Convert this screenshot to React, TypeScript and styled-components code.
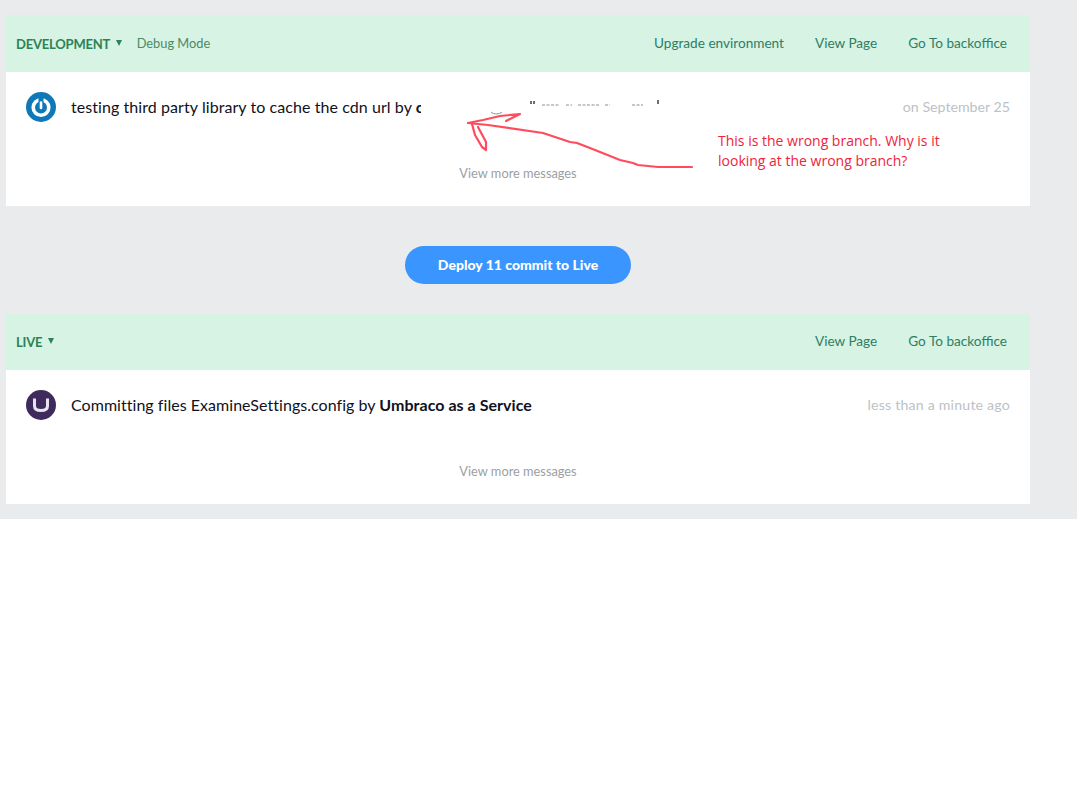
import React from "react";
import styled, { createGlobalStyle } from "styled-components";

const GlobalStyle = createGlobalStyle`
  html, body {
    margin: 0;
    padding: 0;
    background: #ffffff;
    font-family: "Lato", "Open Sans", sans-serif;
  }
`;

const Page = styled.div`
  position: relative;
  width: 1077px;
  height: 519px;
  box-sizing: border-box;
  padding: 15px 47px 15px 6px;
  background: #e9ebed;
`;

const Panel = styled.section`
  background: #ffffff;
`;

const PanelHeader = styled.header<{ $tall?: boolean }>`
  display: flex;
  align-items: center;
  box-sizing: border-box;
  height: ${(p) => (p.$tall ? "57px" : "56px")};
  padding: 0 23px 2px 10px;
  background: #d6f3e3;
  color: #2f7d63;
  font-size: 13.6px;
`;

const EnvName = styled.strong`
  margin-top: 2px;
  color: #2a8356;
  font-size: 13px;
  font-weight: 700;
  letter-spacing: -0.2px;
`;

const Caret = styled.span`
  width: 0;
  height: 0;
  margin-left: 5.5px;
  border-left: 3px solid transparent;
  border-right: 3px solid transparent;
  border-top: 6px solid #2a8356;
`;

const DebugLink = styled.a`
  margin-left: 15px;
  color: #4b8a66;
  font-size: 12.8px;
`;

const Links = styled.nav`
  display: flex;
  gap: 31px;
  margin-left: auto;
`;

const Message = styled.div`
  display: flex;
  align-items: center;
  gap: 15px;
  padding: 20px 20px 0;
  height: 30px;
  color: #111122;
  font-size: 16px;
`;

const Avatar = styled.svg`
  width: 30px;
  height: 30px;
  flex: none;
`;

const MessageText = styled.span<{ $spacing: number }>`
  margin-bottom: 2px;
  letter-spacing: ${(p) => p.$spacing}px;
`;

const Time = styled.span<{ $spacing?: number }>`
  margin: 0 0 2px auto;
  color: #bcc2c6;
  font-size: 14.2px;
  letter-spacing: ${(p) => p.$spacing ?? 0}px;
`;

const More = styled.a`
  display: block;
  margin-top: 40px;
  padding-bottom: 21px;
  color: #9a9fa3;
  font-size: 12.8px;
  line-height: 23px;
  text-align: center;
`;

const DeployRow = styled.div`
  display: flex;
  justify-content: center;
  padding: 40px 0 30px;
`;

const DeployButton = styled.button`
  width: 226px;
  height: 38px;
  padding: 0 0 2px;
  border: 0;
  border-radius: 19px;
  background: #3a95ff;
  color: #ffffff;
  font-family: inherit;
  font-size: 14px;
  font-weight: 900;
`;

const WhiteOut = styled.div`
  position: absolute;
  left: 421px;
  top: 96px;
  width: 285px;
  height: 48px;
  background: #ffffff;
`;

const Scribble = styled.svg`
  position: absolute;
  left: 460px;
  top: 96px;
  width: 240px;
  height: 80px;
`;

const Note = styled.p`
  position: absolute;
  left: 718px;
  top: 131px;
  margin: 0;
  color: #f0233a;
  font-family: "Open Sans", sans-serif;
  font-size: 14px;
  line-height: 20px;
`;

const App = () => (
  <>
    <GlobalStyle />
    <Page>
      <Panel>
        <PanelHeader $tall>
          <EnvName>DEVELOPMENT</EnvName>
          <Caret />
          <DebugLink>Debug Mode</DebugLink>
          <Links>
            <a>Upgrade environment</a>
            <a>View Page</a>
            <a>Go To backoffice</a>
          </Links>
        </PanelHeader>
        <Message>
          <Avatar viewBox="0 0 30 30">
            <circle cx="15" cy="15" r="15" fill="#0f79b8" />
            <circle cx="15" cy="15.5" r="7.8" fill="none" stroke="#ffffff" strokeWidth="3.6" />
            <path d="M15 6v6" stroke="#0f79b8" strokeWidth="5" />
            <path d="M15 10.5v5.5" stroke="#ffffff" strokeWidth="2.6" strokeLinecap="round" />
          </Avatar>
          <MessageText $spacing={0.07}>
            testing third party library to cache the cdn url by <b>c</b>
          </MessageText>
          <Time>on September 25</Time>
        </Message>
        <More>View more messages</More>
      </Panel>
      <DeployRow>
        <DeployButton>Deploy 11 commit to Live</DeployButton>
      </DeployRow>
      <Panel>
        <PanelHeader>
          <EnvName>LIVE</EnvName>
          <Caret />
          <Links>
            <a>View Page</a>
            <a>Go To backoffice</a>
          </Links>
        </PanelHeader>
        <Message>
          <Avatar viewBox="0 0 30 30">
            <circle cx="15" cy="15" r="15" fill="#3e2a5c" />
            <path d="M8.5 8.5v7.5c0 3 2 4.5 6.5 4.5s6.5-1.5 6.5-4.5V8.5" fill="none" stroke="#e8e4ee" strokeWidth="3" />
          </Avatar>
          <MessageText $spacing={0.04}>
            Committing files ExamineSettings.config by <b>Umbraco as a Service</b>
          </MessageText>
          <Time $spacing={0.18}>less than a minute ago</Time>
        </Message>
        <More>View more messages</More>
      </Panel>
      <WhiteOut />
      <Scribble viewBox="0 0 240 80" fill="none">
        <g stroke="#ff4b5c" strokeWidth="2.2" strokeLinejoin="round" strokeLinecap="round">
          <path d="M232 71 L198 71 L178 69 L173 67 L160 64 L150 60 L130 52 L117 47 L110 46 L83 37 L28 29 L8 27" />
          <path d="M8 27 L23 24 L40 20 L60 18 L46 25" />
          <path d="M12 28 L15 39 L22 51 L26 54 L26 46 L18 31" />
        </g>
        <g stroke="#8a8f94" strokeWidth="1">
          <path d="M31 16 C34 19 40 18 42 16" />
          <path d="M82 9h18M106 9h6M118 9h22M145 9h5M172 9h11" strokeDasharray="3 1.5" />
        </g>
        <path d="M71 5v3M74 5v3M198 4v4" stroke="#222222" strokeWidth="1.3" />
      </Scribble>
      <Note>
        This is the wrong branch. Why is it
        <br />
        looking at the wrong branch?
      </Note>
    </Page>
  </>
);

export default App;
